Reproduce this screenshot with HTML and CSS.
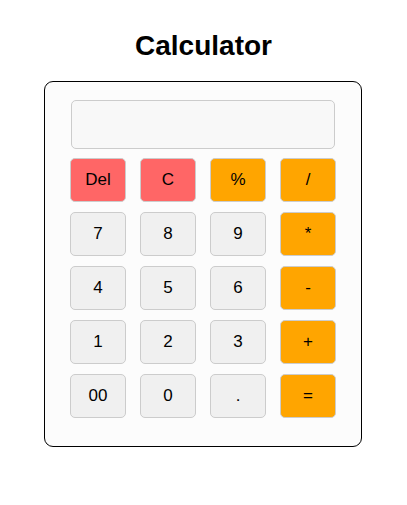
FILE: index.html
```html
<!DOCTYPE html>
<html>
<head>
<meta charset="utf-8">
<link rel="stylesheet" href="styles.css">
</head>
<body>
<h1 class="title">Calculator</h1>
<div class="calculator">
  <div class="display"></div>
  <div class="keys">
    <button class="key key-red">Del</button>
    <button class="key key-red">C</button>
    <button class="key key-orange">%</button>
    <button class="key key-orange">/</button>
    <button class="key">7</button>
    <button class="key">8</button>
    <button class="key">9</button>
    <button class="key key-orange">*</button>
    <button class="key">4</button>
    <button class="key">5</button>
    <button class="key">6</button>
    <button class="key key-orange">-</button>
    <button class="key">1</button>
    <button class="key">2</button>
    <button class="key">3</button>
    <button class="key key-orange">+</button>
    <button class="key">00</button>
    <button class="key">0</button>
    <button class="key">.</button>
    <button class="key key-orange">=</button>
  </div>
</div>
</body>
</html>
```
FILE: styles.css
```css
html, body {
  margin: 0;
  padding: 0;
  background: #ffffff;
}
body {
  font-family: "Liberation Sans", Arial, sans-serif;
  display: flex;
  flex-direction: column;
  align-items: center;
}
.title {
  font-size: 28px;
  line-height: 32px;
  font-weight: bold;
  margin: 30px 0 19px;
  color: #000;
}
.calculator {
  box-sizing: border-box;
  width: 318px;
  height: 366px;
  border: 1px solid #000;
  border-radius: 9px;
  background: #fcfcfc;
  padding: 18px 25px 0 25px;
  display: flex;
  flex-direction: column;
  gap: 9px;
  margin-left: -1px;
}
.display {
  box-sizing: border-box;
  height: 49px;
  margin: 0 1px;
  border: 1px solid #cccccc;
  border-radius: 5px;
  background: #f8f8f8;
}
.keys {
  display: grid;
  grid-template-columns: repeat(4, 56px);
  grid-auto-rows: 44px;
  column-gap: 14px;
  row-gap: 10px;
}
.key {
  box-sizing: border-box;
  margin: 0;
  padding: 0;
  border: 1px solid #cccccc;
  border-radius: 5px;
  background: #f0f0f0;
  color: #000;
  font-family: "Liberation Sans", Arial, sans-serif;
  font-size: 17px;
}
.key-red {
  background: #ff6666;
}
.key-orange {
  background: #ffa500;
}
```
